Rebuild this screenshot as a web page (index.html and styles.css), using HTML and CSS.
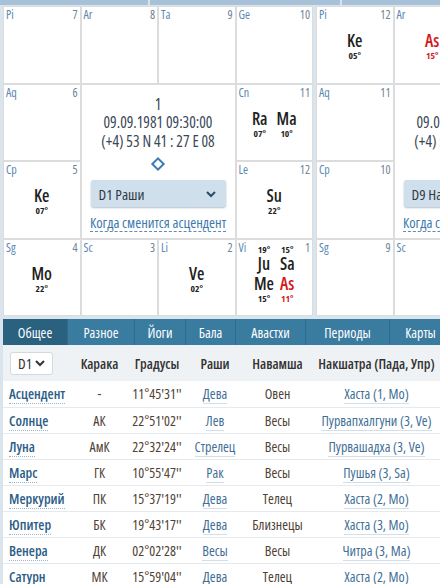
FILE: index.html
```html
<!DOCTYPE html>
<html lang="ru">
<head>
<meta charset="utf-8">
<title>Натальная карта</title>
<link rel="stylesheet" href="styles.css">
</head>
<body>
<div class="page">
  <div class="topbar">
    <span class="topbar-seg seg-1"></span>
    <span class="topbar-seg seg-2"></span>
    <span class="topbar-seg seg-3"></span>
  </div>

  <div class="charts">
    <!-- D1 Раши -->
    <div class="chart">
      <div class="cell"><div class="cell-head"><span class="sign">Pi</span><span class="house">7</span></div></div>
      <div class="cell"><div class="cell-head"><span class="sign">Ar</span><span class="house">8</span></div></div>
      <div class="cell"><div class="cell-head"><span class="sign">Ta</span><span class="house">9</span></div></div>
      <div class="cell"><div class="cell-head"><span class="sign">Ge</span><span class="house">10</span></div></div>
      <div class="cell"><div class="cell-head"><span class="sign">Aq</span><span class="house">6</span></div></div>
      <div class="center">
        <div class="info">
          <div>1</div>
          <div>09.09.1981 09:30:00</div>
          <div>(+4) 53 N 41 : 27 E 08</div>
        </div>
        <span class="diamond"></span>
        <div class="select">
          <span>D1 Раши</span>
          <svg class="chevron" width="12" height="8" viewBox="0 0 12 8"><path d="M2 2 L6 6 L10 2" fill="none" stroke="#2d4a63" stroke-width="2"/></svg>
        </div>
        <a class="asc-link">Когда сменится асцендент</a>
      </div>
      <div class="cell"><div class="cell-head"><span class="sign">Cn</span><span class="house">11</span></div>
        <div class="planets">
          <div class="planet"><span class="p-name">Ra</span><span class="p-deg">07°</span></div>
          <div class="planet"><span class="p-name">Ma</span><span class="p-deg">10°</span></div>
        </div>
      </div>
      <div class="cell"><div class="cell-head"><span class="sign">Cp</span><span class="house">5</span></div>
        <div class="planets">
          <div class="planet"><span class="p-name">Ke</span><span class="p-deg">07°</span></div>
        </div>
      </div>
      <div class="cell"><div class="cell-head"><span class="sign">Le</span><span class="house">12</span></div>
        <div class="planets">
          <div class="planet"><span class="p-name">Su</span><span class="p-deg">22°</span></div>
        </div>
      </div>
      <div class="cell"><div class="cell-head"><span class="sign">Sg</span><span class="house">4</span></div>
        <div class="planets">
          <div class="planet"><span class="p-name">Mo</span><span class="p-deg">22°</span></div>
        </div>
      </div>
      <div class="cell"><div class="cell-head"><span class="sign">Sc</span><span class="house">3</span></div></div>
      <div class="cell"><div class="cell-head"><span class="sign">Li</span><span class="house">2</span></div>
        <div class="planets">
          <div class="planet"><span class="p-name">Ve</span><span class="p-deg">02°</span></div>
        </div>
      </div>
      <div class="cell"><div class="cell-head"><span class="sign">Vi</span><span class="house">1</span></div>
        <div class="planets quad">
          <div class="planet deg-top"><span class="p-name">Ju</span><span class="p-deg">19°</span></div>
          <div class="planet deg-top"><span class="p-name">Sa</span><span class="p-deg">15°</span></div>
          <div class="planet"><span class="p-name">Me</span><span class="p-deg">15°</span></div>
          <div class="planet asc"><span class="p-name">As</span><span class="p-deg">11°</span></div>
        </div>
      </div>
    </div>

    <!-- D9 Навамша -->
    <div class="chart">
      <div class="cell"><div class="cell-head"><span class="sign">Pi</span><span class="house">12</span></div>
        <div class="planets">
          <div class="planet"><span class="p-name">Ke</span><span class="p-deg">05°</span></div>
        </div>
      </div>
      <div class="cell"><div class="cell-head"><span class="sign">Ar</span><span class="house">1</span></div>
        <div class="planets">
          <div class="planet asc"><span class="p-name">As</span><span class="p-deg">15°</span></div>
        </div>
      </div>
      <div class="cell"><div class="cell-head"><span class="sign">Ta</span><span class="house">2</span></div>
        <div class="planets">
          <div class="planet"><span class="p-name">Me</span><span class="p-deg">20°</span></div>
          <div class="planet"><span class="p-name">Sa</span><span class="p-deg">23°</span></div>
        </div>
      </div>
      <div class="cell"><div class="cell-head"><span class="sign">Ge</span><span class="house">3</span></div>
        <div class="planets">
          <div class="planet"><span class="p-name">Ju</span><span class="p-deg">27°</span></div>
        </div>
      </div>
      <div class="cell"><div class="cell-head"><span class="sign">Aq</span><span class="house">11</span></div></div>
      <div class="center">
        <div class="info">
          <div>1</div>
          <div>09.09.1981 09:30:00</div>
          <div>(+4) 53 N 41 : 27 E 08</div>
        </div>
        <span class="diamond"></span>
        <div class="select">
          <span>D9 Навамша</span>
          <svg class="chevron" width="12" height="8" viewBox="0 0 12 8"><path d="M2 2 L6 6 L10 2" fill="none" stroke="#2d4a63" stroke-width="2"/></svg>
        </div>
        <a class="asc-link">Когда сменится асцендент</a>
      </div>
      <div class="cell"><div class="cell-head"><span class="sign">Cn</span><span class="house">4</span></div></div>
      <div class="cell"><div class="cell-head"><span class="sign">Cp</span><span class="house">10</span></div></div>
      <div class="cell"><div class="cell-head"><span class="sign">Le</span><span class="house">5</span></div></div>
      <div class="cell"><div class="cell-head"><span class="sign">Sg</span><span class="house">9</span></div></div>
      <div class="cell"><div class="cell-head"><span class="sign">Sc</span><span class="house">8</span></div></div>
      <div class="cell"><div class="cell-head"><span class="sign">Li</span><span class="house">7</span></div>
        <div class="planets quad">
          <div class="planet deg-top"><span class="p-name">Su</span><span class="p-deg">25°</span></div>
          <div class="planet deg-top"><span class="p-name">Mo</span><span class="p-deg">22°</span></div>
          <div class="planet"><span class="p-name">Ma</span><span class="p-deg">08°</span></div>
          <div class="planet"><span class="p-name">Ve</span><span class="p-deg">18°</span></div>
        </div>
      </div>
      <div class="cell"><div class="cell-head"><span class="sign">Vi</span><span class="house">6</span></div>
        <div class="planets">
          <div class="planet"><span class="p-name">Ra</span><span class="p-deg">05°</span></div>
        </div>
      </div>
    </div>
  </div>

  <nav class="tabs">
    <a class="tab tab-general active">Общее</a>
    <a class="tab tab-misc">Разное</a>
    <a class="tab tab-yoga">Йоги</a>
    <a class="tab tab-bala">Бала</a>
    <a class="tab tab-avastha">Авастхи</a>
    <a class="tab tab-periods">Периоды</a>
    <a class="tab tab-charts">Карты</a>
  </nav>

  <div class="table-panel">
    <table class="planets-table">
      <colgroup>
        <col class="col-name">
        <col class="col-karaka">
        <col class="col-degree">
        <col class="col-rashi">
        <col class="col-navamsha">
        <col class="col-nakshatra">
        <col class="col-rest">
      </colgroup>
      <thead>
        <tr>
          <th class="th-select">
            <div class="mini-select">
              <span>D1</span>
              <svg width="12" height="8" viewBox="0 0 12 8"><path d="M2 2 L6 6 L10 2" fill="none" stroke="#333" stroke-width="2"/></svg>
            </div>
          </th>
          <th>Карака</th>
          <th>Градусы</th>
          <th>Раши</th>
          <th>Навамша</th>
          <th>Накшатра (Пада, Упр)</th>
          <th></th>
        </tr>
      </thead>
      <tbody>
        <tr><td class="name"><a>Асцендент</a></td><td>-</td><td>11°45'31''</td><td class="link"><a>Дева</a></td><td>Овен</td><td class="link"><a>Хаста (1, Mo)</a></td><td></td></tr>
        <tr><td class="name"><a>Солнце</a></td><td>АК</td><td>22°51'02''</td><td class="link"><a>Лев</a></td><td>Весы</td><td class="link"><a>Пурвапхалгуни (3, Ve)</a></td><td></td></tr>
        <tr><td class="name"><a>Луна</a></td><td>АмК</td><td>22°32'24''</td><td class="link"><a>Стрелец</a></td><td>Весы</td><td class="link"><a>Пурвашадха (3, Ve)</a></td><td></td></tr>
        <tr><td class="name"><a>Марс</a></td><td>ГК</td><td>10°55'47''</td><td class="link"><a>Рак</a></td><td>Весы</td><td class="link"><a>Пушья (3, Sa)</a></td><td></td></tr>
        <tr><td class="name"><a>Меркурий</a></td><td>ПК</td><td>15°37'19''</td><td class="link"><a>Дева</a></td><td>Телец</td><td class="link"><a>Хаста (2, Mo)</a></td><td></td></tr>
        <tr><td class="name"><a>Юпитер</a></td><td>БК</td><td>19°43'17''</td><td class="link"><a>Дева</a></td><td>Близнецы</td><td class="link"><a>Хаста (3, Mo)</a></td><td></td></tr>
        <tr><td class="name"><a>Венера</a></td><td>ДК</td><td>02°02'28''</td><td class="link"><a>Весы</a></td><td>Весы</td><td class="link"><a>Читра (3, Ma)</a></td><td></td></tr>
        <tr><td class="name"><a>Сатурн</a></td><td>МК</td><td>15°59'04''</td><td class="link"><a>Дева</a></td><td>Телец</td><td class="link"><a>Хаста (2, Mo)</a></td><td></td></tr>
      </tbody>
    </table>
  </div>
</div>
</body>
</html>
```

FILE: styles.css
```css
* { box-sizing: border-box; }

html, body { margin: 0; }

body {
  width: 440px;
  height: 584px;
  overflow: hidden;
  background: #d9e4ed;
  font-family: "Open Sans", "Noto Sans", sans-serif;
  font-stretch: 75%;
  color: #333;
}

.page {
  width: 700px;
  padding-left: 3px;
}

/* strip of toolbar buttons above the charts */
.topbar {
  display: flex;
  gap: 2px;
  height: 5px;
  margin-left: -3px;
}
.topbar-seg { height: 5px; background: #a7c2d8; }
.seg-1 { width: 148px; }
.seg-2 { width: 190px; }
.seg-3 { flex: 1; }

/* south-indian square charts */
.charts {
  display: flex;
  gap: 3px;
  margin-top: 1px;
}

.chart {
  width: 310px;
  height: 310px;
  flex: 0 0 310px;
  display: grid;
  grid-template-columns: repeat(4, 1fr);
  grid-template-rows: repeat(4, 1fr);
  gap: 2px;
  padding: 1px;
  background: #dcdcdc;
}

.cell {
  background: #fff;
  display: grid;
  min-width: 0;
  min-height: 0;
}
.cell > * { grid-area: 1 / 1; }

.cell-head {
  align-self: start;
  display: flex;
  justify-content: space-between;
  padding: 1px 2px 0 2px;
  font-size: 12px;
  line-height: 14px;
}
.sign { color: #5a88b0; }
.house { color: #6f8495; }

.planets {
  align-self: center;
  justify-self: center;
  display: flex;
  gap: 9px;
  margin-top: 4px;
}
.planets.quad {
  display: grid;
  grid-template-columns: repeat(2, auto);
  column-gap: 6px;
  row-gap: 2px;
  margin-top: -7px;
}

.planet {
  display: flex;
  flex-direction: column;
  align-items: center;
  color: #1f1f1f;
}
.planet.deg-top { flex-direction: column-reverse; }
.planet.asc { color: #d3161c; }

.p-name {
  font-weight: 600;
  font-size: 17px;
  line-height: 18px;
}
.p-deg {
  font-weight: 700;
  font-size: 9.5px;
  line-height: 11px;
}

/* middle block with birth data */
.center {
  grid-column: 2 / 4;
  grid-row: 2 / 4;
  background: #fff;
  display: flex;
  flex-direction: column;
  align-items: center;
  padding-top: 10px;
  color: #3a4757;
}

.info {
  text-align: center;
  font-size: 15.5px;
  line-height: 18.5px;
}

.diamond {
  width: 10px;
  height: 10px;
  margin-top: 9px;
  border: 2px solid #3d7cb1;
  transform: rotate(45deg);
}

.select {
  width: 135px;
  height: 27px;
  margin-top: 11px;
  padding: 0 9px 0 8px;
  display: flex;
  align-items: center;
  justify-content: space-between;
  background: #cfe0ec;
  border-radius: 3px;
  box-shadow: 0 1px 2px rgba(40, 70, 100, 0.35);
  font-size: 15px;
  color: #2f3a45;
  white-space: nowrap;
}

.asc-link {
  margin-top: 8px;
  font-size: 14.5px;
  line-height: 16px;
  color: #3d79ad;
  border-bottom: 1px dashed #5a8cb8;
  white-space: nowrap;
}

/* section tabs */
.tabs {
  display: flex;
  height: 26px;
  margin-top: 3px;
  background: #3a7ba0;
}
.tab {
  display: flex;
  align-items: center;
  justify-content: center;
  color: #fff;
  font-size: 14px;
  border-right: 1px solid #2d6a8d;
}
.tab.active { background: #29617f; }
.tab-general { flex: 0 0 65px; }
.tab-misc { flex: 0 0 67px; }
.tab-yoga { flex: 0 0 51px; }
.tab-bala { flex: 0 0 50px; }
.tab-avastha { flex: 0 0 70px; }
.tab-periods { flex: 0 0 84px; }
.tab-charts { flex: 0 0 62px; }

/* planets table */
.table-panel { background: #fff; }

.planets-table {
  border-collapse: collapse;
  table-layout: fixed;
  width: 560px;
  font-size: 14px;
}
.col-name { width: 75px; }
.col-karaka { width: 43px; }
.col-degree { width: 72px; }
.col-rashi { width: 44px; }
.col-navamsha { width: 81px; }
.col-nakshatra { width: 117px; }
.col-rest { width: 128px; }

.planets-table th {
  height: 36px;
  padding: 0;
  background: #eff2f4;
  font-weight: 600;
  color: #333;
  text-align: center;
  white-space: nowrap;
}
.th-select { text-align: left; }

.mini-select {
  width: 43px;
  height: 23px;
  margin-left: 7px;
  padding: 0 6px 0 7px;
  display: flex;
  align-items: center;
  justify-content: space-between;
  background: #fff;
  border: 1px solid #d4d9dd;
  border-radius: 3px;
  font-weight: normal;
  font-size: 15px;
  color: #333;
}

.planets-table td {
  height: 26px;
  padding: 0;
  border-bottom: 1px solid #e7eaed;
  text-align: center;
  color: #4f4235;
  white-space: nowrap;
}

.planets-table td.name {
  text-align: left;
  padding-left: 6px;
}
.name a {
  font-weight: 600;
  color: #2c5d88;
  border-bottom: 1px dotted #9ab4c9;
}
.link a {
  color: #3f6f96;
  border-bottom: 1px solid #d3dfe8;
}
```
